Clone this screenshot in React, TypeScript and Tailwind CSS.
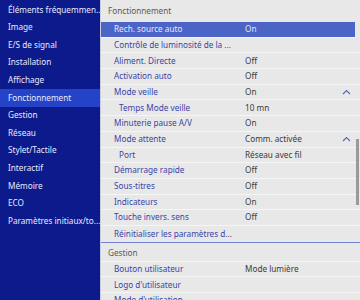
import React from 'react';

type Row = {
  label: string;
  value?: string;
  indent?: boolean;
  chevron?: boolean;
  selected?: boolean;
};

const menu = [
  'Éléments fréquemmen...',
  'Image',
  'E/S de signal',
  'Installation',
  'Affichage',
  'Fonctionnement',
  'Gestion',
  'Réseau',
  'Stylet/Tactile',
  'Interactif',
  'Mémoire',
  'ECO',
  'Paramètres initiaux/to...',
];

const fonctionnement: Row[] = [
  { label: 'Rech. source auto', value: 'On', selected: true },
  { label: 'Contrôle de luminosité de la ...' },
  { label: 'Aliment. Directe', value: 'Off' },
  { label: 'Activation auto', value: 'Off' },
  { label: 'Mode veille', value: 'On', chevron: true },
  { label: 'Temps Mode veille', value: '10 mn', indent: true },
  { label: 'Minuterie pause A/V', value: 'On' },
  { label: 'Mode attente', value: 'Comm. activée', chevron: true },
  { label: 'Port', value: 'Réseau avec fil', indent: true },
  { label: 'Démarrage rapide', value: 'Off' },
  { label: 'Sous-titres', value: 'Off' },
  { label: 'Indicateurs', value: 'On' },
  { label: 'Touche invers. sens', value: 'Off' },
  { label: 'Réinitialiser les paramètres d...' },
];

const gestion: Row[] = [
  { label: 'Bouton utilisateur', value: 'Mode lumière' },
  { label: "Logo d'utilisateur" },
  { label: "Mode d'utilisation" },
];

const Chevron = () => (
  <svg width="9" height="6" viewBox="0 0 9 6" className="absolute right-[9px] top-1/2 -translate-y-1/2">
    <path d="M1 5 L4.5 1.5 L8 5" fill="none" stroke="#5a68b8" strokeWidth="1.2" />
  </svg>
);

const SettingRow: React.FC<{ row: Row; last?: boolean }> = ({ row, last }) => (
  <div
    className={`relative flex items-center h-[15.7px] ${last ? '' : 'border-b border-[#f6f6f6]'} ${
      row.selected ? 'bg-[#4b64c6] mr-[5px]' : ''
    }`}
  >
    <div
      className={`w-[144px] shrink-0 whitespace-nowrap ${row.indent ? 'pl-[18px]' : 'pl-[13px]'} ${
        row.selected ? 'text-[#e4e9ff]' : 'text-[#3845a6]'
      }`}
    >
      {row.label}
    </div>
    {row.value && (
      <div className={`whitespace-nowrap ${row.selected ? 'text-[#e4e9ff]' : 'text-[#3a3a3a]'}`}>{row.value}</div>
    )}
    {row.chevron && <Chevron />}
  </div>
);

export default function App() {
  return (
    <div
      className="flex w-[360px] h-[300px] overflow-hidden text-[8.2px] leading-none"
      style={{ fontFamily: '"Noto Sans", "Open Sans", sans-serif' }}
    >
      <div className="w-[100px] shrink-0 bg-[#0c1a8c] pt-[1px]">
        {menu.map((m) => (
          <div
            key={m}
            className={`h-[17.6px] flex items-center pl-[8px] whitespace-nowrap text-[#e6eaff] ${
              m === 'Fonctionnement' ? 'bg-[#2443c9]' : ''
            }`}
          >
            {m}
          </div>
        ))}
      </div>
      <div className="relative flex-1 bg-[#e8e8e8] border-l border-[#c9cbe0]">
        <div className="h-[22px] flex items-center pl-[7px] text-[#5a5a5a]">Fonctionnement</div>
        {fonctionnement.map((r, i) => (
          <SettingRow key={r.label} row={r} last={i === fonctionnement.length - 1} />
        ))}
        <div className="h-px bg-[#7484d2]" />
        <div className="h-[19px] flex items-center pl-[7px] pt-[2px] border-b border-[#f6f6f6] text-[#5a5a5a]">
          Gestion
        </div>
        {gestion.map((r) => (
          <SettingRow key={r.label} row={r} />
        ))}
        <div className="absolute right-[1px] top-[139px] w-[3px] h-[66px] bg-[#9a9a9a]" />
      </div>
    </div>
  );
}
